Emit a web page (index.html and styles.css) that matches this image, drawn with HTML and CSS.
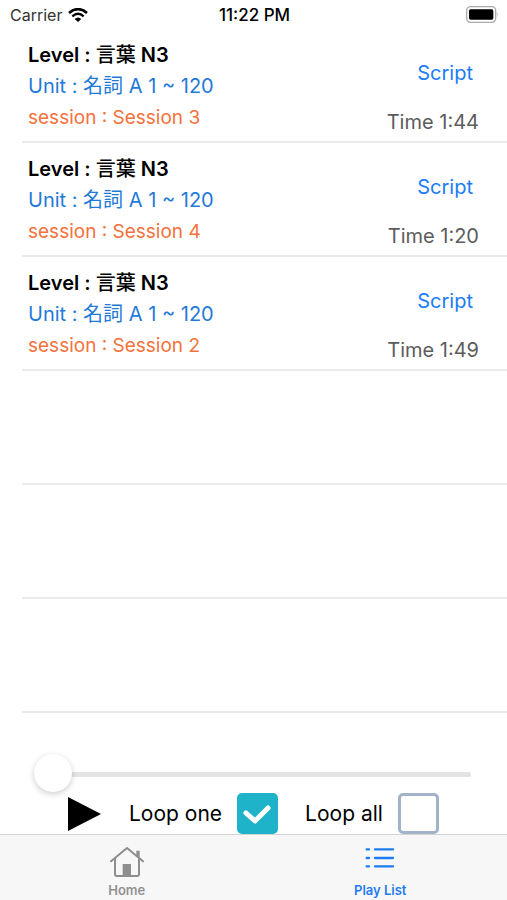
FILE: index.html
```html
<!DOCTYPE html>
<html lang="en">
<head>
<meta charset="utf-8">
<meta name="viewport" content="width=device-width, initial-scale=1">
<title>Play List</title>
<link rel="stylesheet" href="styles.css">
</head>
<body>
<header class="status">
  <div class="status-carrier">
    <span>Carrier</span>
    <svg class="wifi" viewBox="0 0 60 42" aria-hidden="true">
      <path d="M3 15Q30 -8 57 15" fill="none" stroke="#000" stroke-width="8"/>
      <path d="M13 25Q30 10 47 25" fill="none" stroke="#000" stroke-width="7"/>
      <path d="M20 33Q30 24 40 33L30 42Z"/>
    </svg>
  </div>
  <span class="status-time">11:22 PM</span>
  <div class="status-battery">
    <svg class="battery" viewBox="0 0 99 51" aria-hidden="true">
      <rect x="2" y="2" width="87" height="47" rx="12" fill="#fff" stroke="#aaa" stroke-width="4"/>
      <rect x="9" y="10" width="73" height="31" rx="5"/>
      <path d="M93 19Q98 25 93 32Z" fill="#aaa"/>
    </svg>
  </div>
</header>

<main class="content">
  <ul class="list">
    <li class="row">
      <div class="row-info">
        <h2 class="level">Level : <span class="kanji">言葉</span> N3</h2>
        <p class="unit">Unit : 名詞 A 1 ~ 120</p>
        <p class="session">session : Session 3</p>
      </div>
      <div class="row-side">
        <a class="script" href="#">Script</a>
        <span class="time">Time 1:44</span>
      </div>
    </li>
    <li class="row">
      <div class="row-info">
        <h2 class="level">Level : <span class="kanji">言葉</span> N3</h2>
        <p class="unit">Unit : 名詞 A 1 ~ 120</p>
        <p class="session">session : Session 4</p>
      </div>
      <div class="row-side">
        <a class="script" href="#">Script</a>
        <span class="time">Time 1:20</span>
      </div>
    </li>
    <li class="row">
      <div class="row-info">
        <h2 class="level">Level : <span class="kanji">言葉</span> N3</h2>
        <p class="unit">Unit : 名詞 A 1 ~ 120</p>
        <p class="session">session : Session 2</p>
      </div>
      <div class="row-side">
        <a class="script" href="#">Script</a>
        <span class="time">Time 1:49</span>
      </div>
    </li>
    <li class="row"></li>
    <li class="row"></li>
    <li class="row"></li>
  </ul>
</main>

<section class="player">
  <input class="seek" type="range" min="0" max="100" value="0" aria-label="Position">
  <div class="controls">
    <button class="play" type="button" aria-label="Play">
      <svg viewBox="0 0 33 34" aria-hidden="true"><path d="M0 0L33 17L0 34Z"/></svg>
    </button>
    <div class="option">
      <label for="loop-one">Loop one</label>
      <span class="check-box">
        <input class="check" id="loop-one" type="checkbox" checked>
        <svg class="tick" viewBox="0 0 41 41" aria-hidden="true">
          <path d="M9 20L18 28L31 15" fill="none" stroke="#fff" stroke-width="5" stroke-linecap="round" stroke-linejoin="round"/>
        </svg>
      </span>
    </div>
    <div class="option">
      <label for="loop-all">Loop all</label>
      <span class="check-box">
        <input class="check" id="loop-all" type="checkbox">
      </span>
    </div>
  </div>
</section>

<nav class="tabs">
  <a class="tab" href="#">
    <svg class="tab-icon" viewBox="0 0 108 96" aria-hidden="true">
      <g fill="none" stroke="#8e8e8e" stroke-width="6" stroke-linecap="round" stroke-linejoin="round">
        <path d="M6 46L54 6L102 46"/>
        <path d="M18 40V84Q18 90 24 90H84Q90 90 90 84V40"/>
      </g>
      <path d="M82 14H92V38L82 30ZM41 54H66V90H41Z" fill="#8e8e8e"/>
    </svg>
    <span>Home</span>
  </a>
  <a class="tab tab-active" href="#" aria-current="page">
    <svg class="tab-icon" viewBox="0 0 108 96" aria-hidden="true">
      <g fill="none" stroke="#1f7cf2" stroke-width="7" stroke-linecap="round">
        <path d="M14 10H21M39 10H93M14 36H21M39 36H93M14 61H21M39 61H93"/>
      </g>
    </svg>
    <span>Play List</span>
  </a>
</nav>
</body>
</html>
```
FILE: styles.css
```css
* {
  box-sizing: border-box;
}

body {
  margin: 0;
  min-height: 100vh;
  display: flex;
  flex-direction: column;
  background: #fff;
  color: #000;
  font-family: Inter, "Noto Sans CJK JP", sans-serif;
  font-size: 20px;
}

.status {
  display: grid;
  grid-template-columns: 1fr auto 1fr;
  align-items: center;
  height: 29px;
  padding: 0 8px 0 10px;
  font-size: 16px;
}

.status-carrier {
  display: flex;
  align-items: center;
  gap: 6px;
  color: #333;
}

.status-time {
  font-size: 17px;
  font-weight: 500;
}

.status-battery {
  display: flex;
  justify-content: flex-end;
}

.wifi {
  width: 20px;
  height: 14px;
}

.battery {
  width: 33px;
  height: 17px;
}

.content {
  flex: 1;
}

.list {
  margin: 0;
  padding: 0 0 0 22px;
  list-style: none;
}

.row {
  display: flex;
  justify-content: space-between;
  min-height: 114px;
  padding: 11px 28px 0 6px;
  border-bottom: 2px solid #ebebeb;
  line-height: 31px;
}

.level,
.unit,
.session {
  margin: 0;
  font-size: 20px;
  font-weight: 400;
}

.level {
  font-weight: 600;
}

.kanji {
  font-weight: 500;
}

.unit {
  color: #1f7ad8;
}

.session {
  color: #f4713c;
  font-size: 19px;
}

.row-side {
  display: flex;
  flex-direction: column;
  align-items: flex-end;
  justify-content: space-between;
  padding: 18px 0 3px;
}

.script {
  padding-right: 6px;
  color: #1a7cf9;
  text-decoration: none;
}

.time {
  color: #5c5c5c;
}

.seek {
  display: block;
  width: calc(100% - 70px);
  height: 38px;
  margin: 0 36px 0 34px;
  appearance: none;
  background: transparent;
}

.seek::-webkit-slider-runnable-track {
  height: 5px;
  border-radius: 3px;
  background: #e4e4e4;
}

.seek::-webkit-slider-thumb {
  appearance: none;
  width: 38px;
  height: 38px;
  margin-top: -18px;
  border-radius: 50%;
  background: #fff;
  box-shadow: 0 2px 6px rgba(0, 0, 0, 0.2);
}

.controls {
  display: flex;
  align-items: center;
  gap: 27px;
  padding-left: 68px;
  font-size: 21px;
}

.play {
  display: flex;
  width: 34px;
  height: 34px;
  padding: 0;
  border: 0;
  background: none;
}

.option {
  display: flex;
  align-items: center;
  gap: 15px;
}

.check-box {
  display: grid;
}

.check,
.tick {
  grid-area: 1 / 1;
  width: 41px;
  height: 41px;
}

.check {
  appearance: none;
  margin: 0;
  border: 3px solid #a2b3c8;
  border-radius: 5px;
  background: #fff;
}

.check:checked {
  border-color: #1eb3c8;
  background: #1eb3c8;
}

.tick {
  visibility: hidden;
  pointer-events: none;
}

.check:checked + .tick {
  visibility: visible;
}

.tabs {
  display: grid;
  grid-template-columns: 1fr 1fr;
  height: 66px;
  border-top: 1px solid #d4d4d4;
  background: #f7f7f7;
}

.tab {
  display: flex;
  flex-direction: column;
  align-items: center;
  gap: 3px;
  padding-top: 11px;
  color: #929292;
  font-size: 13px;
  font-weight: 600;
  line-height: 18px;
  text-decoration: none;
}

.tab-active {
  color: #1f7cf2;
}

.tab-icon {
  width: 36px;
  height: 32px;
}
```
